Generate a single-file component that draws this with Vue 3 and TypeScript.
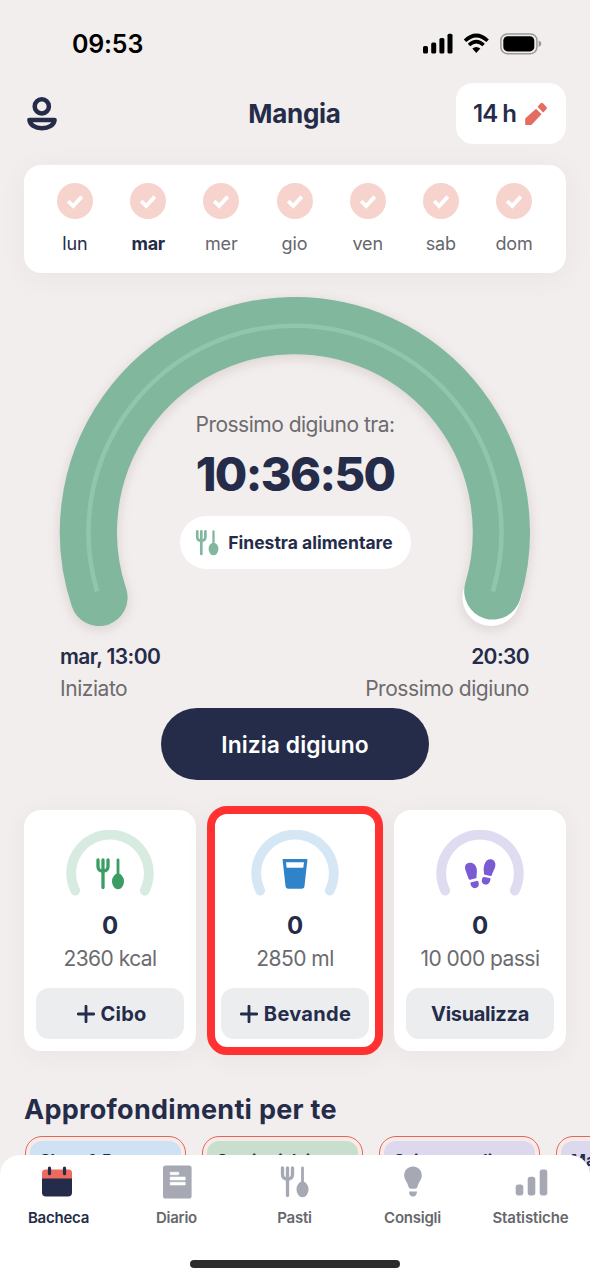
<script setup lang="ts">
interface Day { label: string; state?: 'past' | 'today' }
interface Stat { kind: 'food' | 'drink' | 'steps'; goal: string; action: string; plus: boolean }
interface Insight { title: string; tone: string }
interface Tab { id: string; label: string }

const days: Day[] = [
  { label: 'lun', state: 'past' },
  { label: 'mar', state: 'today' },
  { label: 'mer' },
  { label: 'gio' },
  { label: 'ven' },
  { label: 'sab' },
  { label: 'dom' },
]
const stats: Stat[] = [
  { kind: 'food', goal: '2360 kcal', action: 'Cibo', plus: true },
  { kind: 'drink', goal: '2850 ml', action: 'Bevande', plus: true },
  { kind: 'steps', goal: '10 000 passi', action: 'Visualizza', plus: false },
]
const insights: Insight[] = [
  { title: 'Sleep & Rest', tone: 'blue' },
  { title: 'Sostituti dei', tone: 'green' },
  { title: 'Scintomandi', tone: 'violet' },
  { title: 'Ma', tone: 'violet' },
]
const tabs: Tab[] = [
  { id: 'home', label: 'Bacheca' },
  { id: 'diary', label: 'Diario' },
  { id: 'meals', label: 'Pasti' },
  { id: 'tips', label: 'Consigli' },
  { id: 'charts', label: 'Statistiche' },
]
</script>

<template>
  <div class="screen">
    <svg class="defs" width="0" height="0" aria-hidden="true">
      <symbol id="cutlery" viewBox="0 0 28 32">
        <path d="M2 1.8V8.5Q2 13 7 13Q12 13 12 8.5V1.8M7 1.8V29.5" fill="none" stroke="currentColor" stroke-width="3.3" stroke-linecap="round" stroke-linejoin="round" />
        <path d="M22 1.8V18" stroke="currentColor" stroke-width="2.8" stroke-linecap="round" />
        <ellipse cx="22" cy="23.4" rx="6" ry="7.8" fill="currentColor" />
      </symbol>
    </svg>

    <div class="status">
      <span class="clock">09:53</span>
      <svg class="status-icons" width="119" height="22" viewBox="0 0 119 22">
        <rect x="0" y="13" width="5" height="7.5" rx="1.6" />
        <rect x="8.2" y="9.5" width="5" height="11" rx="1.6" />
        <rect x="16.4" y="5" width="5" height="15.5" rx="1.6" />
        <rect x="24.5" y="0.7" width="5" height="19.8" rx="1.6" />
        <g fill="none" stroke="#000" stroke-width="3.6">
          <path d="M42 7.8Q53.3-2.8 64.6 7.8" />
          <path d="M46 12Q53.3 5.2 60.6 12" />
        </g>
        <path d="M49.3 15.6Q53.3 12.2 57.3 15.6L53.3 20Z" />
        <rect x="77.9" y="0.9" width="36" height="19.8" rx="6.4" fill="none" stroke="#9b9999" stroke-width="1.5" />
        <rect x="80.3" y="3.2" width="31" height="15.2" rx="4.4" />
        <path d="M115.6 7.5Q118.4 8.5 118.4 10.8T115.6 14.1Z" fill="#9b9999" />
      </svg>
    </div>

    <header class="header">
      <svg class="profile" width="30" height="34" viewBox="0 0 30 34" fill="none" stroke="#252c49" stroke-width="4.5">
        <circle cx="14.8" cy="9.4" r="7.1" />
        <path d="M2.4 22.9H27.6C27.2 28 22 31.2 15 31.2S2.8 28 2.4 22.9Z" stroke-linejoin="round" />
      </svg>
      <h1 class="title">Mangia</h1>
      <button class="plan">
        <span class="plan-text">14 h</span>
        <svg width="22" height="24" viewBox="0 0 22 24" fill="#e56c60" stroke="#e56c60" stroke-width="1.6" stroke-linejoin="round">
          <path d="M11 7.8L15.5 12.3L6 22.2H1V16.8Z" />
          <path d="M13.6 4.7L16 2Q16.8 1.2 17.6 2L20.7 5.2Q21.4 6 20.7 6.8L18.2 9.4Z" />
        </svg>
      </button>
    </header>

    <section class="week">
      <div v-for="d in days" :key="d.label" class="day" :class="d.state">
        <svg width="36" height="36" viewBox="0 0 36 36">
          <circle cx="18" cy="18" r="18" fill="#f7d3ce" />
          <path d="M11.2 18.2L16.2 23L24.8 13.6" fill="none" stroke="#fff" stroke-width="3.8" />
        </svg>
        <span>{{ d.label }}</span>
      </div>
    </section>

    <section class="timer">
      <svg class="ring" width="510" height="350" viewBox="40 289.5 510 350" fill="none">
        <g class="ring-shadow" stroke-width="57.2" stroke-linecap="round">
          <path d="M494 589L491 597" stroke="#fff" />
          <path d="M99 597A206.5 206.5 0 1 1 492.8 590.5" stroke="#80b79d" />
        </g>
        <path d="M97.2 591A206.5 206.5 0 1 1 492.8 591" stroke="#91c6ac" stroke-width="4.6" />
      </svg>
      <div class="timer-body">
        <p class="caption">Prossimo digiuno tra:</p>
        <p class="countdown">10:36:50</p>
        <div class="window">
          <svg class="window-icon" width="24" height="26"><use href="#cutlery" /></svg>
          <span>Finestra alimentare</span>
        </div>
      </div>
    </section>

    <section class="range">
      <div>
        <p class="time">mar, 13:00</p>
        <p class="note">Iniziato</p>
      </div>
      <div class="end">
        <p class="time">20:30</p>
        <p class="note">Prossimo digiuno</p>
      </div>
    </section>

    <button class="cta">Inizia digiuno</button>

    <section class="stats">
      <article v-for="s in stats" :key="s.kind" class="card" :class="s.kind">
        <div class="gauge">
          <svg width="88" height="66" viewBox="0 0 88 66">
            <path class="track" d="M9.2 60.5A38.8 38.8 0 1 1 78.8 60.5" />
          </svg>
          <svg v-if="s.kind === 'food'" class="gauge-icon" width="28" height="32"><use href="#cutlery" /></svg>
          <svg v-else-if="s.kind === 'drink'" class="gauge-icon" width="28" height="32" viewBox="0 0 28 32">
            <path d="M2.1 1H25.9Q26.5 1 26.4 2L23.5 28Q23.2 30.8 20.6 30.8H7.4Q4.8 30.8 4.5 28L1.6 2Q1.5 1 2.1 1Z" fill="#2f84c9" />
            <path d="M5 4.2H23L22.3 9.8H5.7Z" fill="#fff" />
          </svg>
          <svg v-else class="gauge-icon" width="32" height="32" viewBox="0 0 32 32" fill="#7a5bd3">
            <path d="M1.4 12C.2 7.5 2.1 5.3 5.5 4.8C9 4.3 12.2 7 12.8 11.5C13.2 15 12.2 17.3 12.6 19.3Q12.6 20.1 11.8 20.3L6.2 21.8Q5 22 4.6 20.8Z" />
            <path d="M6.4 25.6Q6.2 24.6 7.2 24.3L12.6 22.9Q13.7 22.6 14.2 23.6C15.6 26.6 14.8 29.2 12 30C8.8 30.7 6.8 28.8 6.4 25.6Z" />
            <path d="M20 15.4C20.1 13 19 11.5 20.4 6.5C21.8 2.2 25 .6 28 1.6C31.7 2.8 31.9 7 30.8 10C29.7 12.8 28.4 14.6 27.9 17Q27.6 18.1 26.5 17.9L20.9 16.8Q20 16.6 20 15.4Z" />
            <path d="M18.6 19.7Q19 18.8 20 19L25.6 20.1Q26.7 20.4 26.5 21.5C25.8 25.2 24 26.9 21.3 26.6C17.8 26.2 17 22.8 18.6 19.7Z" />
          </svg>
        </div>
        <p class="value">0</p>
        <p class="goal">{{ s.goal }}</p>
        <button class="action">
          <svg v-if="s.plus" width="18" height="18" viewBox="0 0 18 18"><path d="M9 1.2V16.8M1.2 9H16.8" stroke="#252c49" stroke-width="2.8" stroke-linecap="round" /></svg>
          <span>{{ s.action }}</span>
        </button>
      </article>
    </section>

    <h2 class="heading">Approfondimenti per te</h2>
    <section class="insights">
      <article v-for="i in insights" :key="i.title" class="insight">
        <div class="insight-fill" :class="i.tone">{{ i.title }}</div>
      </article>
    </section>

    <nav class="tabs">
      <div class="tab-row">
        <div v-for="t in tabs" :key="t.id" class="tab" :class="t.id">
          <svg v-if="t.id === 'home'" width="34" height="34" viewBox="0 0 34 34">
            <path d="M2 16V8Q2 4.5 5.5 4.5H28.5Q32 4.5 32 8V16Z" fill="#ee6a5f" />
            <path d="M2 13.5H32V27.5Q32 31.5 28 31.5H6Q2 31.5 2 27.5Z" fill="#252c49" />
            <path d="M9.5 3V8.7M24.5 3V8.7" stroke="#252c49" stroke-width="3.2" stroke-linecap="round" />
          </svg>
          <svg v-else-if="t.id === 'diary'" width="34" height="34" viewBox="0 0 34 34">
            <rect x="3" y=".6" width="28.6" height="33" rx="2.6" fill="#a6a8b4" />
            <path d="M10.2 7.2H18.8V9.8H10.2ZM10.2 12H25.2V15H10.2ZM10.2 17.2H25.2V20H10.2Z" fill="#fff" stroke="#fff" stroke-width=".6" stroke-linejoin="round" />
          </svg>
          <svg v-else-if="t.id === 'meals'" width="34" height="34" viewBox="0 0 34 34"><use href="#cutlery" x="1.5" y="1" width="30" height="32" /></svg>
          <svg v-else-if="t.id === 'tips'" width="34" height="34" viewBox="0 0 34 34" fill="#a6a8b4">
            <path d="M17 1.4C22 1.4 25.8 5.2 25.8 10.2C25.8 15 22.8 16.3 21.4 22Q21 23.8 19.2 23.8H14.8Q13 23.8 12.6 22C11.2 16.3 8.2 15 8.2 10.2C8.2 5.2 12 1.4 17 1.4Z" />
            <path d="M13 26.4H21Q20.7 31.5 17 31.5T13 26.4Z" />
          </svg>
          <svg v-else width="34" height="34" viewBox="0 0 34 34" fill="#a6a8b4">
            <rect x="1.7" y="19.6" width="7.6" height="10.8" rx="2.6" />
            <rect x="13.7" y="11.8" width="7.6" height="18.6" rx="2.6" />
            <rect x="25.7" y="4.4" width="7.6" height="26" rx="2.6" />
          </svg>
          <span>{{ t.label }}</span>
        </div>
      </div>
      <div class="home-bar"></div>
    </nav>
  </div>
</template>

<style>
html, body { margin: 0; background: #f2eeed; }
</style>

<style scoped>
.screen {
  position: relative;
  width: 590px;
  height: 1280px;
  overflow: hidden;
  box-sizing: border-box;
  background: #f2eeed;
  color: #252c49;
  font-family: Inter, "Open Sans", sans-serif;
}
p, h1, h2 { margin: 0; white-space: nowrap; }
button { border: 0; padding: 0; color: inherit; font: inherit; white-space: nowrap; }
svg { display: block; flex: none; }
.defs { position: absolute; }

.status {
  height: 83px;
  box-sizing: border-box;
  padding: 5px 48px 0 72px;
  display: flex;
  align-items: center;
  justify-content: space-between;
  color: #000;
}
.clock { font-size: 25px; font-weight: 600; letter-spacing: -0.2px; }

.header {
  height: 61px;
  padding: 0 24px 0 27px;
  display: grid;
  grid-template-columns: 110px 1fr 110px;
  align-items: center;
}
.title { text-align: center; font-size: 26px; font-weight: 650; letter-spacing: -0.3px; padding: 0 4px 0 0; }
.plan {
  height: 61px;
  border-radius: 17px;
  background: #fff;
  display: flex;
  align-items: center;
  justify-content: center;
  gap: 9px;
  box-sizing: border-box;
  padding-right: 2px;
}
.plan-text { font-size: 24px; font-weight: 600; letter-spacing: -1px; }

.week {
  margin: 21px 24px 0;
  height: 108px;
  box-sizing: border-box;
  padding: 18px 15px 0 14px;
  border-radius: 17px;
  background: #fff;
  box-shadow: 0 4px 28px rgba(80, 50, 50, 0.05);
  display: grid;
  grid-template-columns: repeat(7, 73.2px);
  justify-content: center;
}
.day { display: flex; flex-direction: column; align-items: center; gap: 14px; font-size: 18px; line-height: 22px; color: #66676d; letter-spacing: -0.1px; }
.day.past { color: #252c49; }
.day.today { color: #252c49; font-weight: 700; letter-spacing: -0.4px; }

.timer { height: 350px; margin: 17px 40px 0; display: grid; }
.ring, .timer-body { grid-area: 1 / 1; }
.ring-shadow { filter: drop-shadow(0 3px 6px rgba(90, 60, 60, 0.16)); }
.timer-body { z-index: 1; display: flex; flex-direction: column; align-items: center; padding-top: 121px; }
.caption { font-size: 21px; line-height: 28px; color: #6c6b6f; letter-spacing: -0.5px; }
.countdown { margin-top: 7px; font-size: 47px; line-height: 56px; font-weight: 760; letter-spacing: -1.6px; }
.window {
  margin-top: 14px;
  width: 231px;
  height: 53px;
  border-radius: 27px;
  background: #fff;
  display: flex;
  align-items: center;
  justify-content: center;
  gap: 9px;
  padding: 0 2px 0 0;
  box-sizing: border-box;
  font-size: 17.5px;
  font-weight: 650;
  white-space: nowrap;
}
.window-icon { color: #80b79d; }

.range { margin: 1px 61px 0 60px; height: 67px; display: flex; justify-content: space-between; }
.time { font-size: 21px; line-height: 32px; font-weight: 620; letter-spacing: -0.6px; }
.note { font-size: 21px; line-height: 32px; color: #6c6b6f; letter-spacing: -0.45px; }
.end { text-align: right; }

.cta {
  display: block;
  width: 268px;
  height: 72px;
  margin: 0 auto;
  border-radius: 36px;
  background: #252c49;
  color: #fff;
  font-size: 22.8px;
  font-weight: 620;
  letter-spacing: 0.1px;
}

.stats { margin: 30px 24px 0; display: grid; grid-template-columns: repeat(3, 172px); justify-content: space-between; }
.card {
  height: 241px;
  box-sizing: border-box;
  padding: 20px 12px 12px;
  border-radius: 17px;
  background: #fff;
  box-shadow: 0 4px 24px rgba(80, 50, 50, 0.05);
  display: flex;
  flex-direction: column;
  align-items: center;
}
/* highlighted card: slightly larger than its column so the frame sits around it */
.card.drink {
  width: 176px;
  height: 249px;
  margin: -4px -2px;
  padding: 24px 14px 16px;
  border-radius: 20px;
  outline: 8px solid #ff3131;
  outline-offset: -8px;
}
.gauge { display: grid; justify-items: center; }
.gauge > svg { grid-area: 1 / 1; }
.gauge-icon { margin-top: 28px; }
.track { fill: none; stroke-width: 9.8; stroke-linecap: round; }
.food .track { stroke: #d7ebe0; }
.drink .track { stroke: #d5e7f5; }
.steps .track { stroke: #dfdbf1; }
.food .gauge-icon { color: #3b9d63; }
.value { margin-top: 14px; font-size: 24px; line-height: 32px; font-weight: 650; }
.goal { margin-top: 1px; font-size: 21px; line-height: 32px; color: #6c6b6f; letter-spacing: -0.55px; }
.action {
  margin-top: 13px;
  width: 148px;
  height: 51px;
  flex: none;
  border-radius: 13px;
  background: #ebedef;
  display: flex;
  align-items: center;
  justify-content: center;
  gap: 6px;
  font-size: 20px;
  font-weight: 650;
}
.food .action { letter-spacing: 0.2px; padding-left: 3px; box-sizing: border-box; }
.drink .action { letter-spacing: 0.3px; padding-left: 1px; box-sizing: border-box; }
.steps .action { letter-spacing: -0.3px; }

.heading { margin: 41px 24px 0; font-size: 27px; line-height: 36px; font-weight: 750; letter-spacing: 0.3px; }
.insights { margin: 8px 0 0 25px; display: flex; gap: 16px; }
.insight {
  flex: none;
  width: 161px;
  height: 160px;
  box-sizing: border-box;
  padding: 4px;
  border: 1.6px solid #e0665c;
  border-radius: 17px;
  background: #f8eae7;
}
.insight-fill { height: 100%; box-sizing: border-box; padding: 9px 10px; border-radius: 12px; font-size: 16px; line-height: 20px; font-weight: 650; white-space: nowrap; }
.blue { background: #cfe2f5; }
.green { background: #c9dfcd; }
.violet { background: #dcd8ed; }

.tabs {
  position: absolute;
  left: 0;
  right: 0;
  bottom: 0;
  height: 125px;
  border-radius: 20px 20px 0 0;
  background: #fff;
}
.tab-row { display: grid; grid-template-columns: repeat(5, 118px); padding-top: 10px; margin-left: -0.5px; }
.tab { display: flex; flex-direction: column; align-items: center; gap: 9px; font-size: 15px; line-height: 20px; font-weight: 600; letter-spacing: -0.25px; color: #66676d; }
.tab svg { color: #a6a8b4; }
.tab.home { color: #252c49; }
.tab.home svg { margin-left: -4px; }
.tab.charts { letter-spacing: -0.1px; }
.home-bar { width: 210px; height: 8px; margin: 32px auto 0; border-radius: 4px; background: #2d2d2d; }
</style>
